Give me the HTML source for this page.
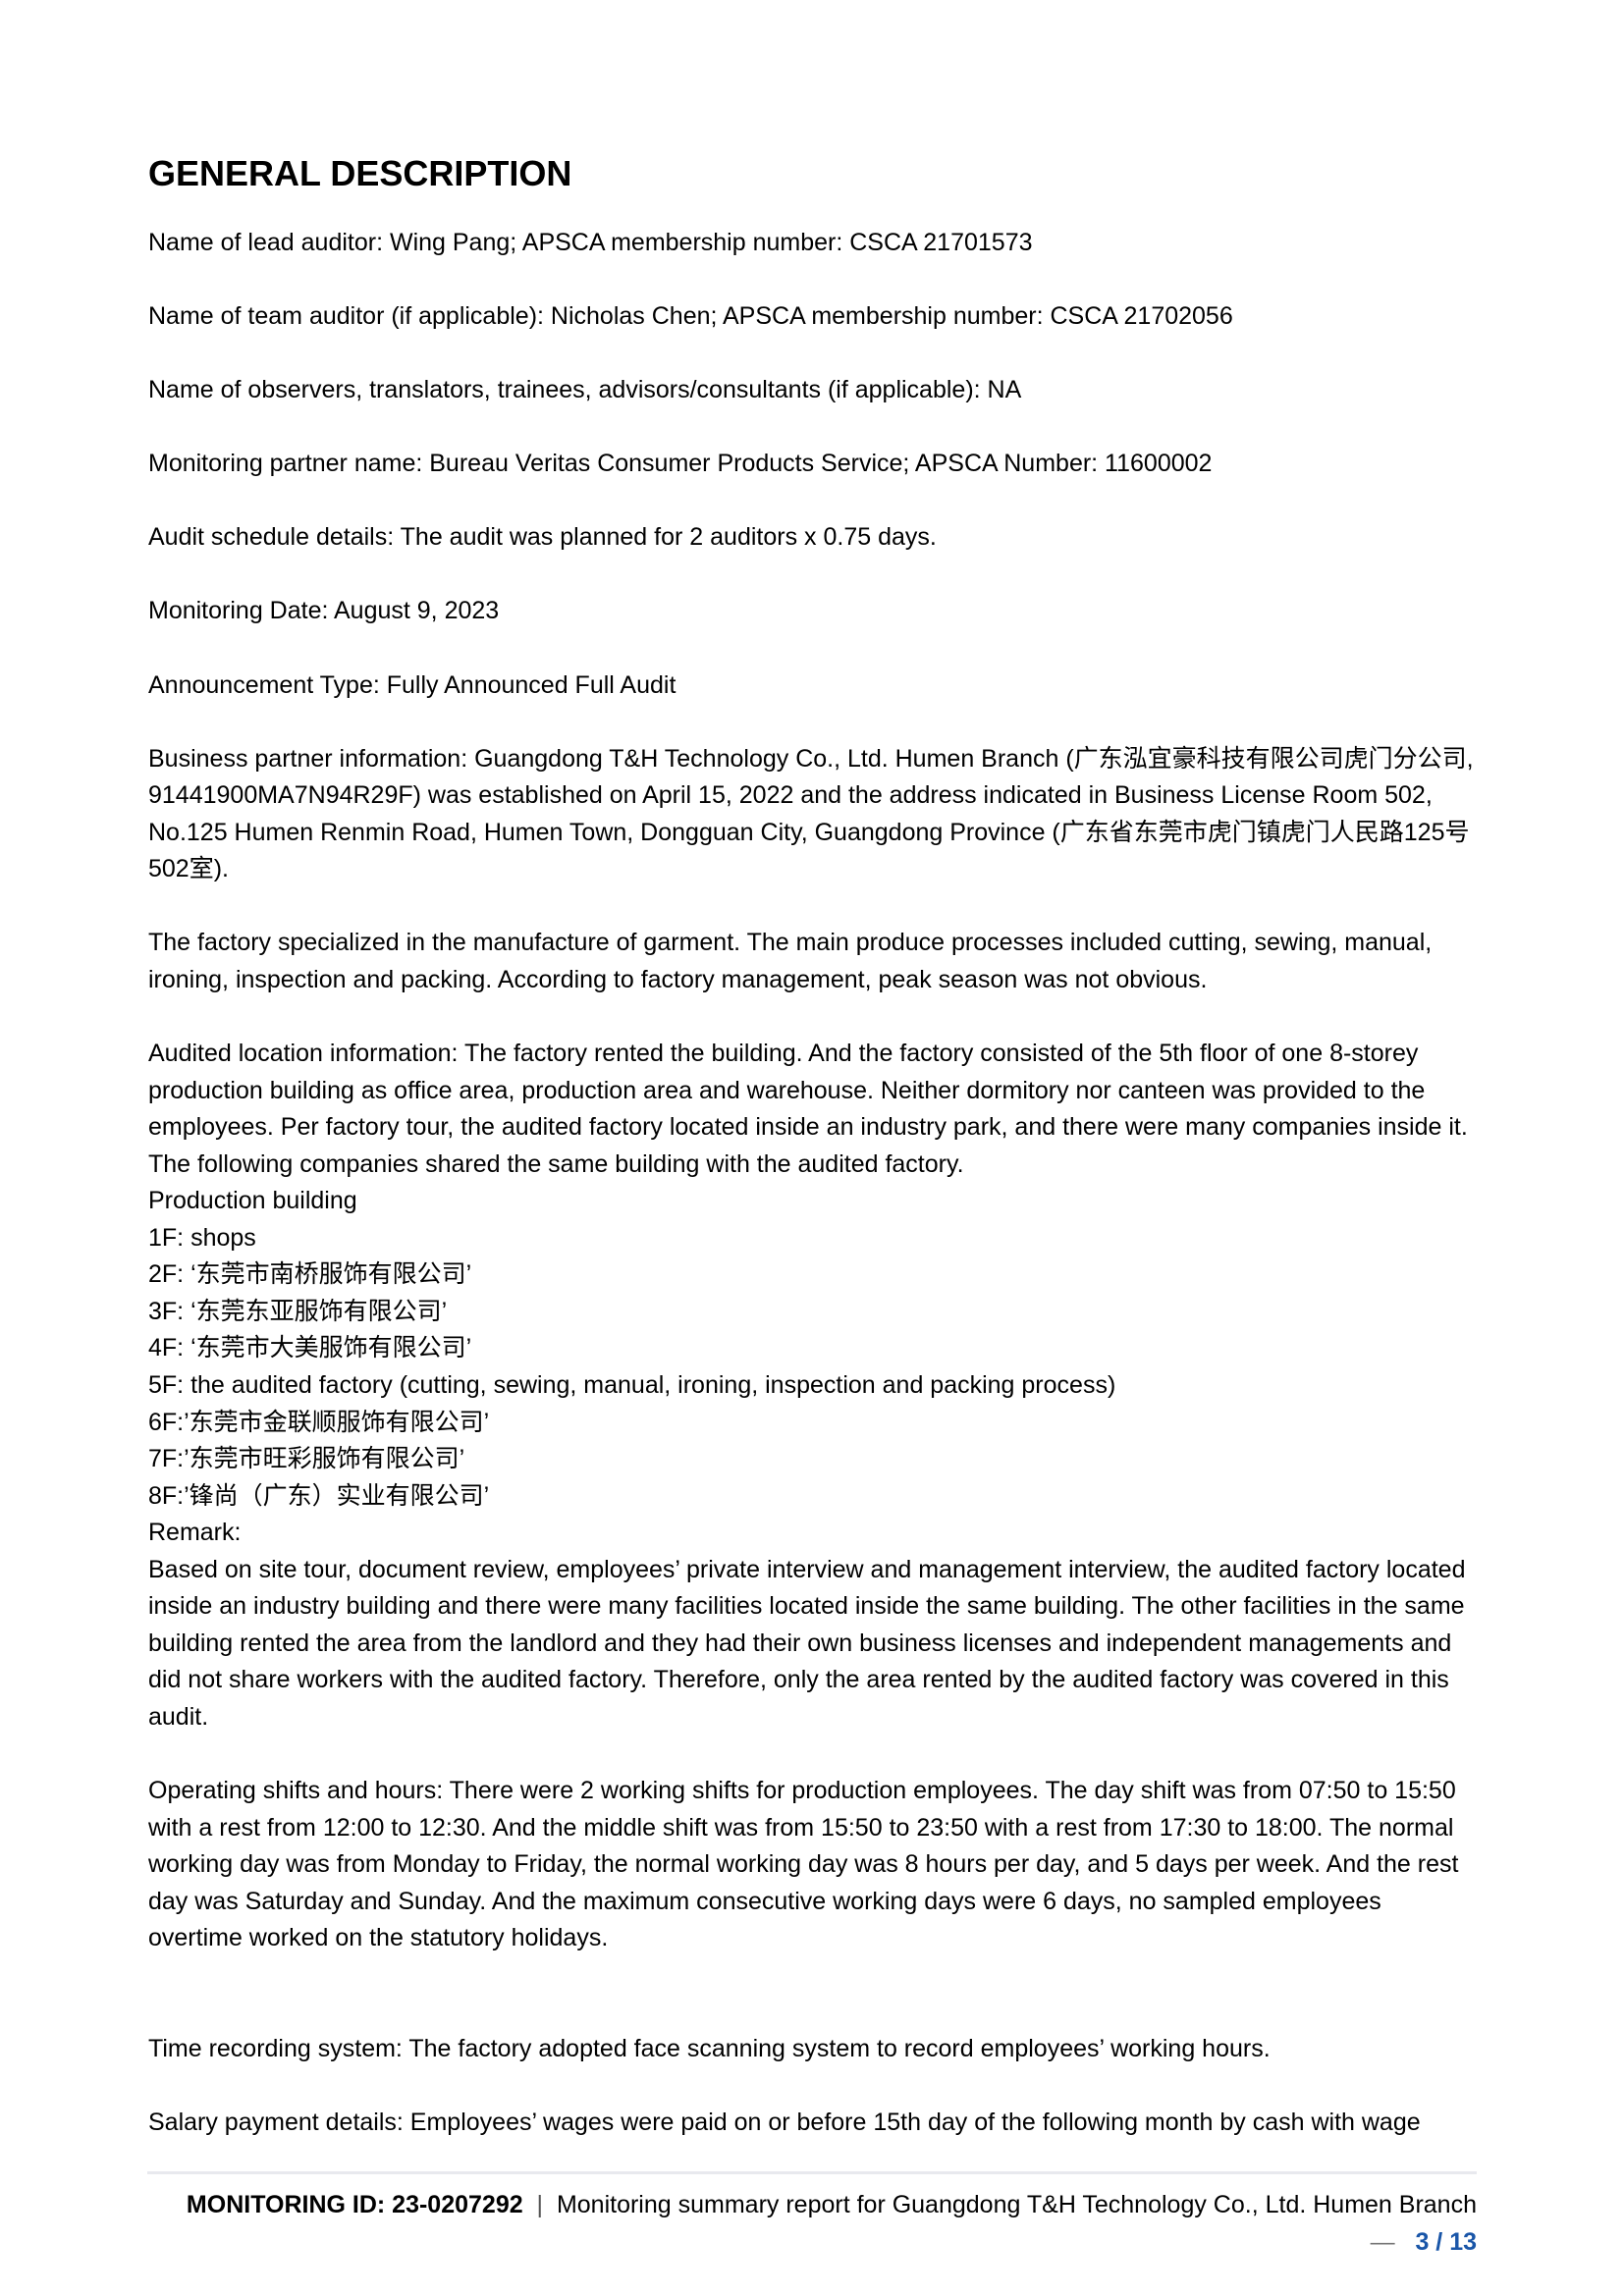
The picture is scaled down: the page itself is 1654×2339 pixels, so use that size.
<!DOCTYPE html>
<html><head><meta charset="utf-8"><style>
body{margin:0;background:#fff;width:1654px;height:2339px;position:relative;overflow:hidden;font-family:"Liberation Sans","Noto Sans CJK SC",sans-serif;color:#000}
h1{position:absolute;left:151px;top:154px;margin:0;font-size:36px;font-weight:bold;line-height:46px}
#t{position:absolute;left:151px;top:229px;font-size:25px;line-height:37.55px;white-space:nowrap}
#t div{height:37.55px}
#hr{position:absolute;left:150px;top:2212px;width:1354px;height:3px;background:#e8e9ee}
#f1{position:absolute;right:150px;top:2232px;font-size:25px;line-height:29px;white-space:nowrap}
#f2{position:absolute;right:150px;top:2270px;font-size:25px;line-height:29px;font-weight:bold;color:#1a56a8}
</style></head><body>
<h1>GENERAL DESCRIPTION</h1>
<div id="t">
<div>Name of lead auditor: Wing Pang; APSCA membership number: CSCA 21701573</div><div></div>
<div>Name of team auditor (if applicable): Nicholas Chen; APSCA membership number: CSCA 21702056</div><div></div>
<div>Name of observers, translators, trainees, advisors/consultants (if applicable): NA</div><div></div>
<div>Monitoring partner name: Bureau Veritas Consumer Products Service; APSCA Number: 11600002</div><div></div>
<div>Audit schedule details: The audit was planned for 2 auditors x 0.75 days.</div><div></div>
<div>Monitoring Date: August 9, 2023</div><div></div>
<div>Announcement Type: Fully Announced Full Audit</div><div></div>
<div>Business partner information: Guangdong T&amp;H Technology Co., Ltd. Humen Branch (广东泓宜豪科技有限公司虎门分公司,</div>
<div>91441900MA7N94R29F) was established on April 15, 2022 and the address indicated in Business License Room 502,</div>
<div>No.125 Humen Renmin Road, Humen Town, Dongguan City, Guangdong Province (广东省东莞市虎门镇虎门人民路125号</div>
<div>502室).</div><div></div>
<div>The factory specialized in the manufacture of garment. The main produce processes included cutting, sewing, manual,</div>
<div>ironing, inspection and packing. According to factory management, peak season was not obvious.</div><div></div>
<div>Audited location information: The factory rented the building. And the factory consisted of the 5th floor of one 8-storey</div>
<div>production building as office area, production area and warehouse. Neither dormitory nor canteen was provided to the</div>
<div>employees. Per factory tour, the audited factory located inside an industry park, and there were many companies inside it.</div>
<div>The following companies shared the same building with the audited factory.</div>
<div>Production building</div>
<div>1F: shops</div>
<div>2F: ‘东莞市南桥服饰有限公司’</div>
<div>3F: ‘东莞东亚服饰有限公司’</div>
<div>4F: ‘东莞市大美服饰有限公司’</div>
<div>5F: the audited factory (cutting, sewing, manual, ironing, inspection and packing process)</div>
<div>6F:’东莞市金联顺服饰有限公司’</div>
<div>7F:’东莞市旺彩服饰有限公司’</div>
<div>8F:’锋尚（广东）实业有限公司’</div>
<div>Remark:</div>
<div>Based on site tour, document review, employees’ private interview and management interview, the audited factory located</div>
<div>inside an industry building and there were many facilities located inside the same building. The other facilities in the same</div>
<div>building rented the area from the landlord and they had their own business licenses and independent managements and</div>
<div>did not share workers with the audited factory. Therefore, only the area rented by the audited factory was covered in this</div>
<div>audit.</div><div></div>
<div>Operating shifts and hours: There were 2 working shifts for production employees. The day shift was from 07:50 to 15:50</div>
<div>with a rest from 12:00 to 12:30. And the middle shift was from 15:50 to 23:50 with a rest from 17:30 to 18:00. The normal</div>
<div>working day was from Monday to Friday, the normal working day was 8 hours per day, and 5 days per week. And the rest</div>
<div>day was Saturday and Sunday. And the maximum consecutive working days were 6 days, no sampled employees</div>
<div>overtime worked on the statutory holidays.</div><div></div><div></div>
<div>Time recording system: The factory adopted face scanning system to record employees’ working hours.</div><div></div>
<div>Salary payment details: Employees’ wages were paid on or before 15th day of the following month by cash with wage</div>
</div>
<div id="hr"></div>
<div id="f1"><b>MONITORING ID: 23-0207292</b> &nbsp;<span style="color:#555">|</span>&nbsp; Monitoring summary report for Guangdong T&amp;H Technology Co., Ltd. Humen Branch</div>
<div id="f2"><span style="color:#777;font-weight:normal">—</span>&nbsp;&nbsp; 3 / 13</div>
</body></html>
